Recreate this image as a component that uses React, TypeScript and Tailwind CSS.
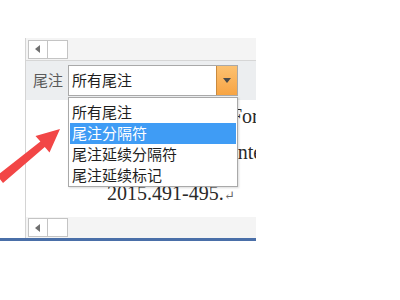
import React from "react";

const cjk = { fontFamily: '"Noto Sans CJK SC", "Noto Sans", sans-serif' };
const serif = { fontFamily: '"Liberation Serif", "DejaVu Serif", serif' };

const items = ["所有尾注", "尾注分隔符", "尾注延续分隔符", "尾注延续标记"];

const ScrollBox = () => (
  <div className="ml-[2px] flex h-[19px] w-[40px] border border-[#c4c4c4] bg-white">
    <div className="flex w-[19px] items-center justify-center border-r border-[#c4c4c4]">
      <svg width="6" height="8" viewBox="0 0 6 8">
        <polygon points="5,0 5,8 0,4" fill="#707070" />
      </svg>
    </div>
    <div className="flex-1" />
  </div>
);

export default function App() {
  return (
    <div className="relative h-[300px] w-[400px] overflow-hidden bg-white">
      <div className="pt-[38px]">
        <div className="relative ml-[25px] w-[231px] overflow-hidden border-l border-[#d4d4d4]">
          {/* top scroll strip */}
          <div className="flex h-[22px] items-center bg-[#f4f4f4]">
            <ScrollBox />
          </div>
          <div className="h-px bg-[#d6d6d6]" />

          {/* toolbar */}
          <div className="flex h-[39px] items-start bg-[#eceef0] pl-[7px] pt-[4px]" style={cjk}>
            <div className="flex h-[31px] w-[35px] items-center text-[15px] text-[#5a5a5a]">尾注</div>
            <div className="flex h-[31px] w-[170px] border border-[#a9a9a9] bg-white">
              <div className="flex flex-1 items-center pl-[3px] text-[15px] text-[#1e1e1e]">所有尾注</div>
              <div className="flex w-[21px] items-center justify-center border-l border-[#c98a3e] bg-gradient-to-b from-[#fcc170] to-[#f7a443]">
                <svg width="8" height="5" viewBox="0 0 8 5">
                  <polygon points="0,0 8,0 4,5" fill="#4a4a4a" />
                </svg>
              </div>
            </div>
          </div>

          {/* document area */}
          <div className="h-[117px] bg-white pt-[6px] text-[20px] leading-[20px] text-[#2a2a2a]" style={serif}>
            <div className="ml-[205px] whitespace-nowrap">For</div>
            <div className="ml-[205px] mt-[16px] whitespace-nowrap">Inte</div>
            <div className="ml-[81px] mt-[21px] whitespace-nowrap">
              2015.491-495.<span className="text-[13px] text-[#666]">↵</span>
            </div>
          </div>

          {/* bottom scroll strip */}
          <div className="flex h-[21px] items-center bg-[#f4f4f4]">
            <ScrollBox />
          </div>

          {/* dropdown list */}
          <div
            className="absolute left-[42px] top-[59px] h-[90px] w-[170px] border border-[#a9a9a9] bg-white px-[1px] pt-[4px] shadow-[1px_1px_2px_rgba(0,0,0,0.15)]"
            style={cjk}
          >
            {items.map((t, i) => (
              <div
                key={t}
                className={
                  i === 1
                    ? "flex h-[21px] items-center bg-[#3f9cf5] pl-[2px] text-[15px] text-white"
                    : "flex h-[21px] items-center pl-[2px] text-[15px] text-[#1e1e1e]"
                }
              >
                {t}
              </div>
            ))}
          </div>
        </div>
        <div className="h-[3px] w-[256px] bg-[#4a6fa8]" />
      </div>

      {/* red pointer arrow */}
      <svg className="absolute left-0 top-0" width="400" height="300" viewBox="0 0 400 300">
        <polygon
          points="-3,175.5 40.4,141.5 35.5,136 60,129 49.5,152.5 44.8,146.9 3,183"
          fill="#f24646"
        />
      </svg>
    </div>
  );
}
